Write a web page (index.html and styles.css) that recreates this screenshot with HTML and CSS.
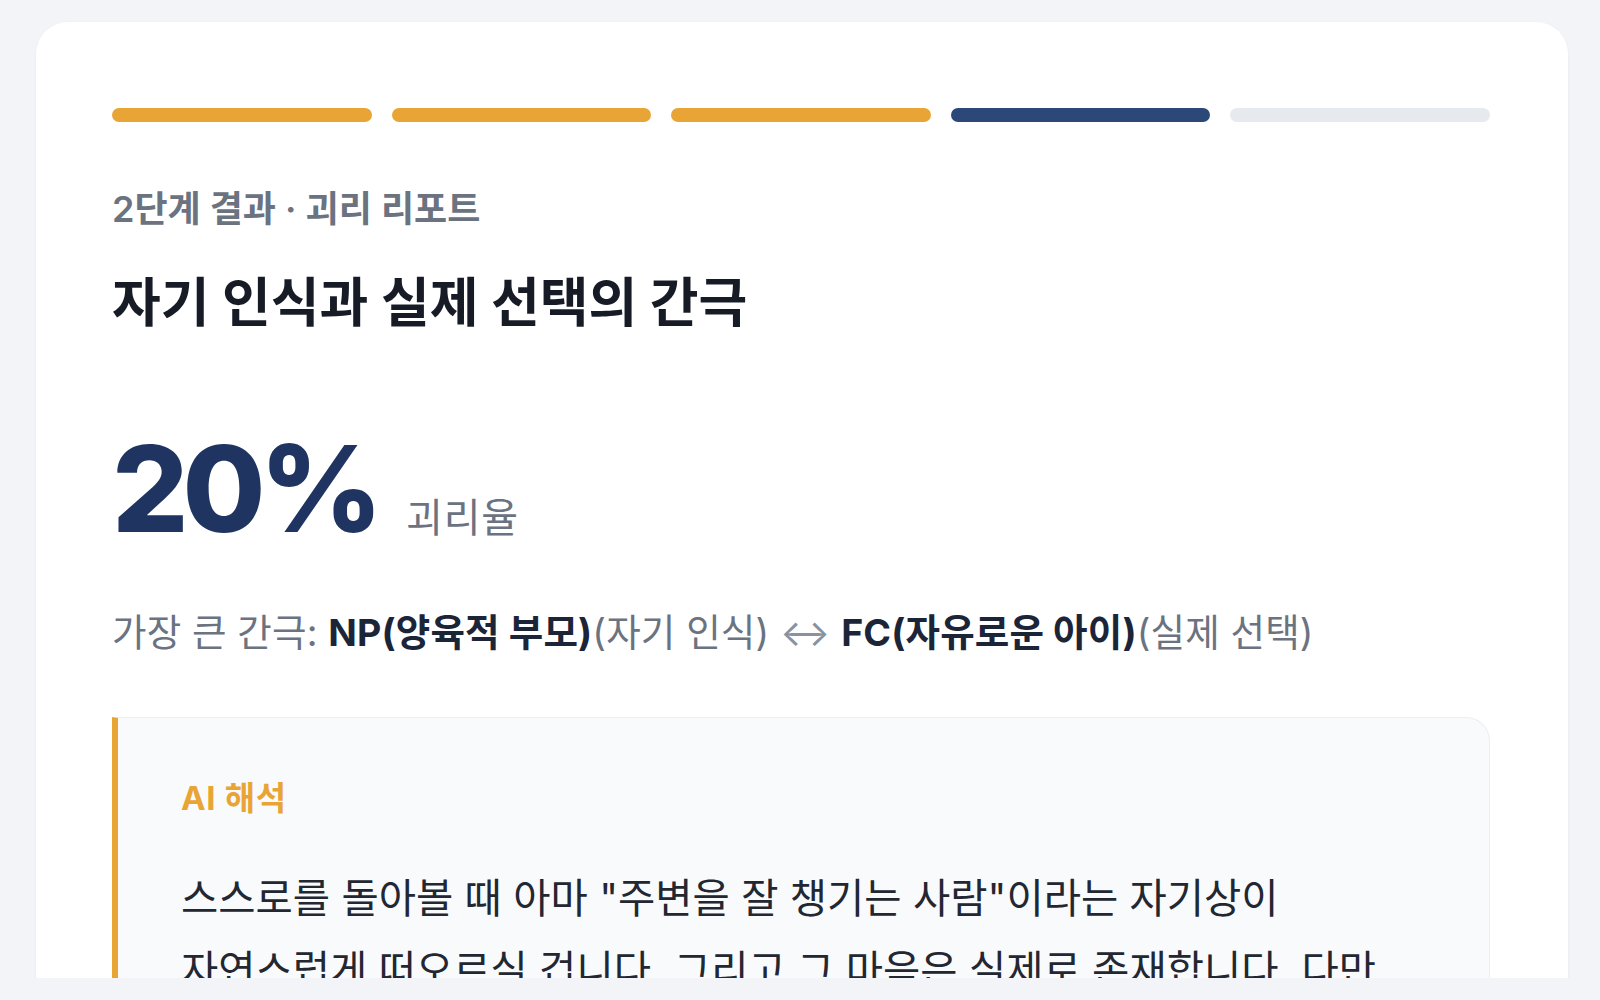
FILE: index.html
```html
<!DOCTYPE html>
<html lang="ko">
<head>
  <meta charset="utf-8">
  <title>괴리 리포트</title>
  <link rel="stylesheet" href="styles.css">
</head>
<body>

  <div class="viewport">
    <div class="card">

      <div class="progress">
        <div class="step done"></div>
        <div class="step done"></div>
        <div class="step done"></div>
        <div class="step current"></div>
        <div class="step"></div>
      </div>

      <p class="eyebrow">2단계 결과 · 괴리 리포트</p>
      <h1 class="title">자기 인식과 실제 선택의 간극</h1>

      <div class="score">
        <span class="score-value">20%</span>
        <span class="score-label">괴리율</span>
      </div>

      <p class="gap">
        가장 큰 간극: <strong>NP(양육적 부모)</strong>(자기 인식) <span class="arrow">↔</span> <strong>FC(자유로운 아이)</strong>(실제 선택)
      </p>

      <div class="insight">
        <h2 class="insight-label">AI 해석</h2>
        <p class="insight-text">
          스스로를 돌아볼 때 아마 "주변을 잘 챙기는 사람"이라는 자기상이 자연스럽게 떠오르실 겁니다. 그리고 그 마음은 실제로 존재합니다. 다만 구체적인 상황에서 고른 선택들을 보면, 책임보다 즐거움과 자유를 따르는 쪽으로 움직이는 경우가 더 많았습니다.
        </p>
      </div>

    </div>
  </div>

</body>
</html>
```

FILE: styles.css
```css
body {
  margin: 0;
  background-color: #f3f4f7;
  font-family: Inter, "Noto Sans CJK KR", sans-serif;
  color: #1c2230;
}

/* visible area, the rest is cut off */
.viewport {
  height: 978px;
  overflow: hidden;
  padding: 22px 32px 0 36px;
  box-sizing: border-box;
}

.card {
  background-color: #fff;
  border-radius: 32px;
  padding: 86px 78px 40px 76px;
  box-shadow: 0 1px 3px rgba(20, 30, 50, 0.06);
}

/* Progress Bar */
.progress {
  display: grid;
  grid-template-columns: repeat(5, 1fr);
  gap: 20px;
}

.step {
  height: 14px;
  border-radius: 7px;
  background-color: #e6e9ed;
}

.step.done {
  background-color: #e8a535;
}

.step.current {
  background-color: #2b4878;
}

.eyebrow {
  margin: 63px 0 0;
  font-size: 36px;
  line-height: 48px;
  font-weight: 600;
  color: #6b7280;
}

.title {
  margin: 38px 0 0;
  font-size: 53px;
  line-height: 64px;
  font-weight: 700;
  color: #161b26;
}

/* Score */
.score {
  display: flex;
  align-items: baseline;
  gap: 29px;
  margin-top: 94px;
}

.score-value {
  font-size: 120px;
  line-height: 1;
  font-weight: 800;
  color: #1f3461;
  letter-spacing: -0.05em;
}

.score-label {
  font-size: 40px;
  color: #6b7280;
  letter-spacing: 0.02em;
}

.gap {
  margin: 60px 0 0;
  font-size: 37.5px;
  line-height: 48px;
  color: #6b7280;
  letter-spacing: 0.004em;
}

.gap strong {
  font-weight: 700;
  color: #1c2538;
}

.arrow {
  color: #8a929e;
}

/* AI Box */
.insight {
  margin-top: 60px;
  padding: 60px 68px 40px 63px;
  background-color: #f9fafc;
  border: 1px solid #eceef2;
  border-left: 6px solid #e8a535;
  border-radius: 0 24px 24px 0;
}

.insight-label {
  margin: 0;
  font-size: 33px;
  line-height: 40px;
  font-weight: 700;
  color: #e8a535;
  letter-spacing: 0.02em;
}

.insight-text {
  margin: 45px 0 0;
  font-size: 40.5px;
  line-height: 72px;
  color: #222732;
  word-break: keep-all;
}
```
